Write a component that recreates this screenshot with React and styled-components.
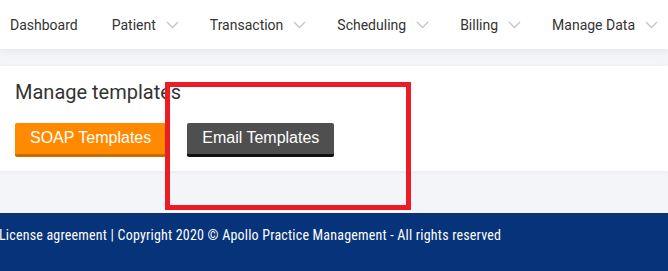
import React from "react";
import styled, { createGlobalStyle } from "styled-components";

const Global = createGlobalStyle`
  html, body { margin: 0; padding: 0; background: #f4f5f8; }
  body { font-family: Roboto, "Liberation Sans", sans-serif; }
  * { box-sizing: border-box; }
`;

const Page = styled.div`
  position: relative;
  width: 668px;
  height: 271px;
  overflow: hidden;
  display: flex;
  flex-direction: column;
  background: #f4f5f8;
`;

const Header = styled.header`
  height: 49px;
  flex: none;
  background: #fff;
  display: flex;
  align-items: center;
  padding-left: 10px;
  gap: 31px;
  box-shadow: 0 2px 8px rgba(0, 0, 0, 0.07);
  position: relative;
  z-index: 1;
`;

const NavItem = styled.div`
  display: flex;
  align-items: center;
  gap: 10px;
  font-family: Roboto, sans-serif;
  font-size: 14px;
  color: #333;
  white-space: nowrap;
  margin-right: ${(p) => (p.$plain ? "3px" : "0")};
`;

const Chevron = () => (
  <svg width="13" height="8" viewBox="0 0 13 8" fill="none">
    <path d="M1 1l5.5 5.5L12 1" stroke="#c4c4c4" strokeWidth="1.3" />
  </svg>
);

const Main = styled.main`
  flex: 1;
  padding-top: 17px;
`;

const Card = styled.section`
  background: #fff;
  padding: 14px 15px 14px;
  box-shadow: 0 1px 4px rgba(0, 0, 0, 0.05);
`;

const Title = styled.h2`
  margin: 0 0 19px;
  font-family: Roboto, sans-serif;
  font-weight: 400;
  font-size: 20px;
  line-height: 24px;
  color: #333;
`;

const Buttons = styled.div`
  display: flex;
  gap: 21px;
`;

const Button = styled.button`
  font-family: "Liberation Sans", Arial, sans-serif;
  font-size: 16px;
  line-height: 18px;
  color: #fff;
  border: none;
  border-radius: 2px;
  padding: 6px 15px 7px;
  border-bottom: 3px solid ${(p) => p.$edge};
  background: ${(p) => p.$bg};
  cursor: pointer;
`;

const Footer = styled.footer`
  height: 58px;
  flex: none;
  background: #07337a;
  color: #fff;
  padding: 14px 0 0 0;
`;

const FooterText = styled.div`
  font-family: "Roboto Condensed", "Liberation Sans Narrow", Roboto, sans-serif;
  font-size: 14px;
  line-height: 17px;
  letter-spacing: 0.2px;
  margin-left: -1px;
  white-space: nowrap;
`;

const Highlight = styled.div`
  position: absolute;
  left: 165px;
  top: 82px;
  width: 246px;
  height: 128px;
  border: 5px solid #ed1c24;
  pointer-events: none;
  z-index: 2;
`;

export default function App() {
  const items = ["Patient", "Transaction", "Scheduling", "Billing", "Manage Data"];
  return (
    <>
      <Global />
      <Page>
        <Header>
          <NavItem $plain>Dashboard</NavItem>
          {items.map((t) => (
            <NavItem key={t}>
              {t}
              <Chevron />
            </NavItem>
          ))}
        </Header>
        <Main>
          <Card>
            <Title>Manage templates</Title>
            <Buttons>
              <Button $bg="#ff8a00" $edge="#c96d00">SOAP Templates</Button>
              <Button $bg="#4f4f4f" $edge="#111">Email Templates</Button>
            </Buttons>
          </Card>
        </Main>
        <Footer>
          <FooterText>
            License agreement | Copyright 2020 © Apollo Practice Management - All rights reserved
          </FooterText>
        </Footer>
        <Highlight />
      </Page>
    </>
  );
}
